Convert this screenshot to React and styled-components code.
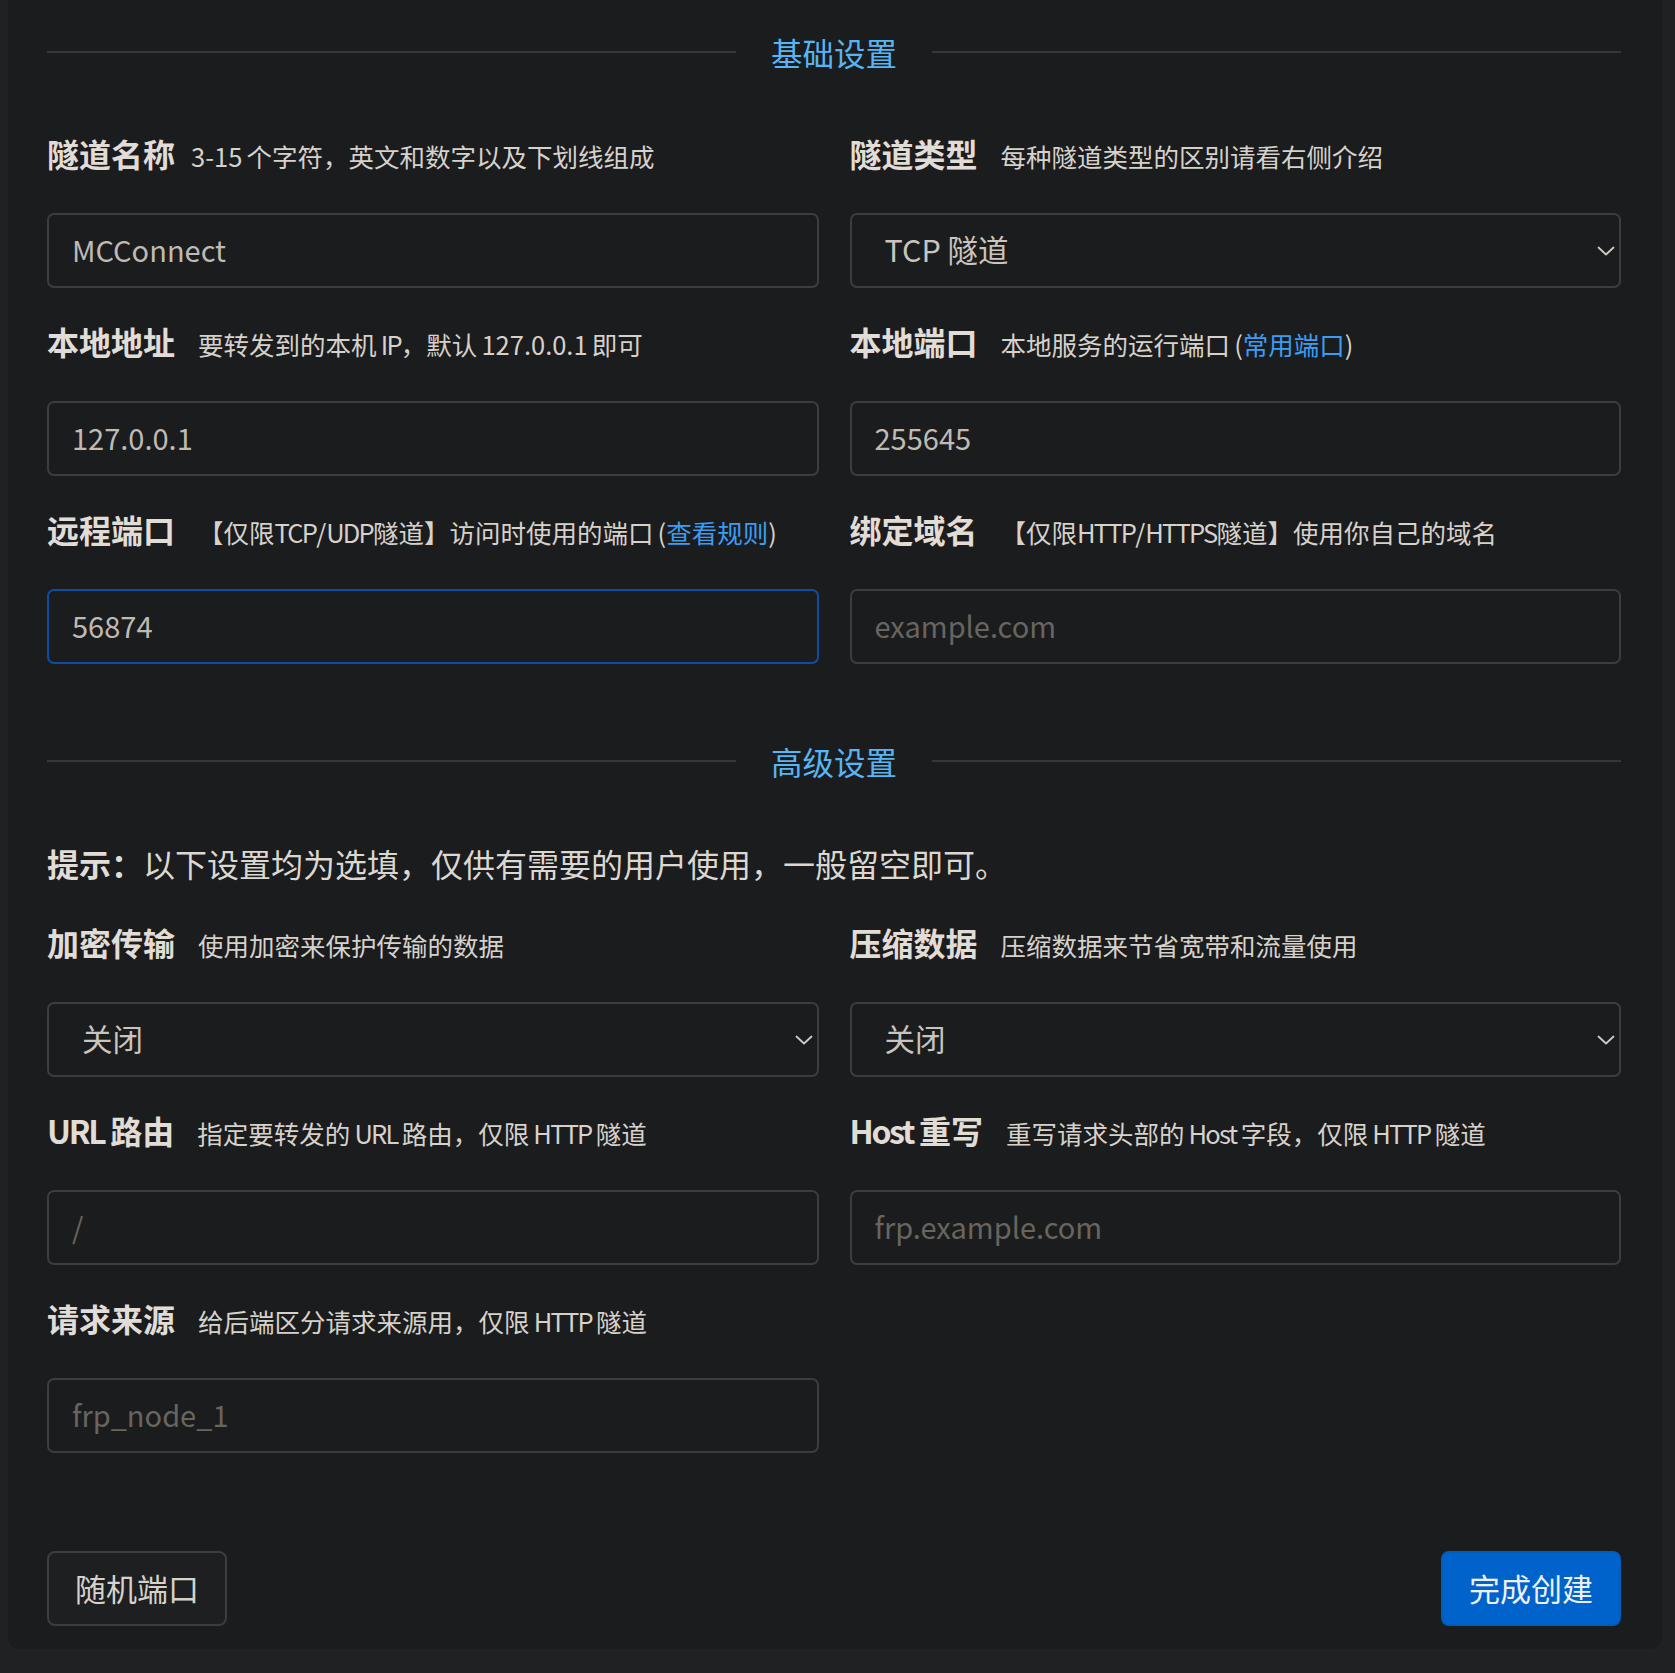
import React from 'react';
import styled, { createGlobalStyle } from 'styled-components';

const GlobalStyle = createGlobalStyle`
  html, body {
    margin: 0;
    padding: 0;
    background: #1f2122;
  }
  body {
    font-family: "Noto Sans CJK SC", "Noto Sans", sans-serif;
    color: #dfdbd4;
  }
`;

const fieldsBasic = [
  { label: '隧道名称', hint: '3-15 个字符，英文和数字以及下划线组成', tight: true, value: 'MCConnect' },
  { label: '隧道类型', hint: '每种隧道类型的区别请看右侧介绍', select: 'TCP 隧道' },
  { label: '本地地址', hint: '要转发到的本机 IP，默认 127.0.0.1 即可', value: '127.0.0.1' },
  { label: '本地端口', hint: ['本地服务的运行端口 (', '常用端口', ')'], value: '255645' },
  { label: '远程端口', hint: ['【仅限TCP/UDP隧道】访问时使用的端口 (', '查看规则', ')'], value: '56874', focused: true },
  { label: '绑定域名', hint: '【仅限HTTP/HTTPS隧道】使用你自己的域名', placeholder: 'example.com' },
];

const fieldsAdvanced = [
  { label: '加密传输', hint: '使用加密来保护传输的数据', select: '关闭' },
  { label: '压缩数据', hint: '压缩数据来节省宽带和流量使用', select: '关闭' },
  { label: 'URL 路由', hint: '指定要转发的 URL 路由，仅限 HTTP 隧道', placeholder: '/' },
  { label: 'Host 重写', hint: '重写请求头部的 Host 字段，仅限 HTTP 隧道', placeholder: 'frp.example.com' },
  { label: '请求来源', hint: '给后端区分请求来源用，仅限 HTTP 隧道', placeholder: 'frp_node_1' },
];

// latin letters in the mixed text are set a little tighter than the CJK glyphs
function Mixed({ text }) {
  return text.split(/([A-Za-z]+)/).map((part, i) =>
    /^[A-Za-z]+$/.test(part) ? <Latin key={i}>{part}</Latin> : part
  );
}

function Hint({ hint, tight }) {
  if (Array.isArray(hint)) {
    return (
      <HintText $tight={tight}>
        <Mixed text={hint[0]} /><Link>{hint[1]}</Link>{hint[2]}
      </HintText>
    );
  }
  return <HintText $tight={tight}><Mixed text={hint} /></HintText>;
}

function Field({ f }) {
  return (
    <FieldBox>
      <LabelRow>
        <Label><Mixed text={f.label} /></Label>
        <Hint hint={f.hint} tight={f.tight} />
      </LabelRow>
      {f.select ? (
        <SelectWrap>
          <Select defaultValue={f.select}>
            <option>{f.select}</option>
          </Select>
          <Chevron width="18" height="10" viewBox="0 0 18 10">
            <path d="M1.5 1.5 L9 8.5 L16.5 1.5" fill="none" stroke="#cfcbc4" strokeWidth="1.8" strokeLinecap="round" strokeLinejoin="round" />
          </Chevron>
        </SelectWrap>
      ) : (
        <Input
          $focused={f.focused}
          defaultValue={f.value}
          placeholder={f.placeholder}
        />
      )}
    </FieldBox>
  );
}

export default function App() {
  return (
    <Page>
      <GlobalStyle />
      <Card>
        <Divider $top={30}>
          <Line />
          <SectionTitle>基础设置</SectionTitle>
          <Line />
        </Divider>
        <Grid $top={59}>
          {fieldsBasic.map(f => <Field key={f.label} f={f} />)}
        </Grid>

        <Divider $top={43}>
          <Line />
          <SectionTitle>高级设置</SectionTitle>
          <Line />
        </Divider>
        <Tip><b>提示：</b>以下设置均为选填，仅供有需要的用户使用，一般留空即可。</Tip>
        <Grid $top={35}>
          {fieldsAdvanced.map(f => <Field key={f.label} f={f} />)}
        </Grid>

        <Actions>
          <Button>随机端口</Button>
          <Button $primary>完成创建</Button>
        </Actions>
      </Card>
    </Page>
  );
}

const Page = styled.div`
  min-height: 1673px;
  padding: 0 13px 23px 8px;
  box-sizing: border-box;
`;

const Card = styled.div`
  width: 1654px;
  box-sizing: border-box;
  background: #1b1c1e;
  border-radius: 0 0 12px 12px;
  padding: 1px 41px 23px 39px;
`;

const Divider = styled.div`
  display: flex;
  align-items: center;
  height: 44px;
  margin-top: ${props => props.$top - 1}px;
`;

const Line = styled.div`
  flex: 1;
  height: 2px;
  background: #33383a;
`;

const SectionTitle = styled.div`
  padding: 0 35px;
  font-size: 31.5px;
  line-height: 42px;
  color: #58b5f3;
`;

const Grid = styled.div`
  display: grid;
  grid-template-columns: 1fr 1fr;
  column-gap: 31px;
  margin-top: ${props => props.$top}px;
`;

const FieldBox = styled.div`
  margin-bottom: 33px;
`;

const LabelRow = styled.div`
  display: flex;
  align-items: baseline;
  height: 44px;
  line-height: 40px;
  margin-bottom: 36px;
  white-space: nowrap;
`;

const Label = styled.span`
  font-size: 32px;
  font-weight: 700;
  color: #e1ddd6;
  word-spacing: -0.05em;
`;

const HintText = styled.span`
  margin-left: ${props => (props.$tight ? 16 : 23)}px;
  font-size: 25.5px;
  color: #d6d2cb;
  word-spacing: -0.06em;
`;

const Latin = styled.span`
  letter-spacing: -0.07em;
`;

const Link = styled.span`
  color: #3b9cf3;
`;

const Input = styled.input`
  display: block;
  width: 100%;
  height: 75px;
  box-sizing: border-box;
  padding: 0 23px 4px;
  background: transparent;
  border: 2px solid ${props => (props.$focused ? '#0d4ea3' : '#3a3e40')};
  border-radius: 7px;
  font-family: "Noto Sans CJK SC", "Noto Sans", sans-serif;
  font-size: 29px;
  color: #bfbab3;
  outline: none;

  &::placeholder {
    color: #68655f;
  }
`;

const SelectWrap = styled.div`
  position: relative;
`;

const Select = styled.select`
  display: block;
  width: 100%;
  height: 75px;
  box-sizing: border-box;
  padding: 0 60px 4px 33px;
  appearance: none;
  background: transparent;
  border: 2px solid #3a3e40;
  border-radius: 7px;
  font-family: "Noto Sans CJK SC", "Noto Sans", sans-serif;
  font-size: 30.5px;
  color: #c9c4bd;
  outline: none;
`;

const Chevron = styled.svg`
  position: absolute;
  right: 6px;
  top: 33px;
  pointer-events: none;
`;

const Tip = styled.div`
  margin-top: 60px;
  height: 44px;
  line-height: 40px;
  font-size: 32px;
  color: #dcd8d1;
  white-space: nowrap;

  b {
    font-weight: 700;
    color: #e1ddd6;
  }
`;

const Actions = styled.div`
  display: flex;
  justify-content: space-between;
  margin-top: 65px;
`;

const Button = styled.button`
  height: 75px;
  box-sizing: border-box;
  padding: 0 26px 3px;
  font-family: "Noto Sans CJK SC", "Noto Sans", sans-serif;
  font-size: 31px;
  border-radius: 8px;
  cursor: pointer;
  color: ${props => (props.$primary ? '#eef1f4' : '#d6d2cb')};
  background: ${props => (props.$primary ? '#0063cc' : '#1d1f20')};
  border: 2px solid ${props => (props.$primary ? '#005dc0' : '#3a3e40')};
`;
